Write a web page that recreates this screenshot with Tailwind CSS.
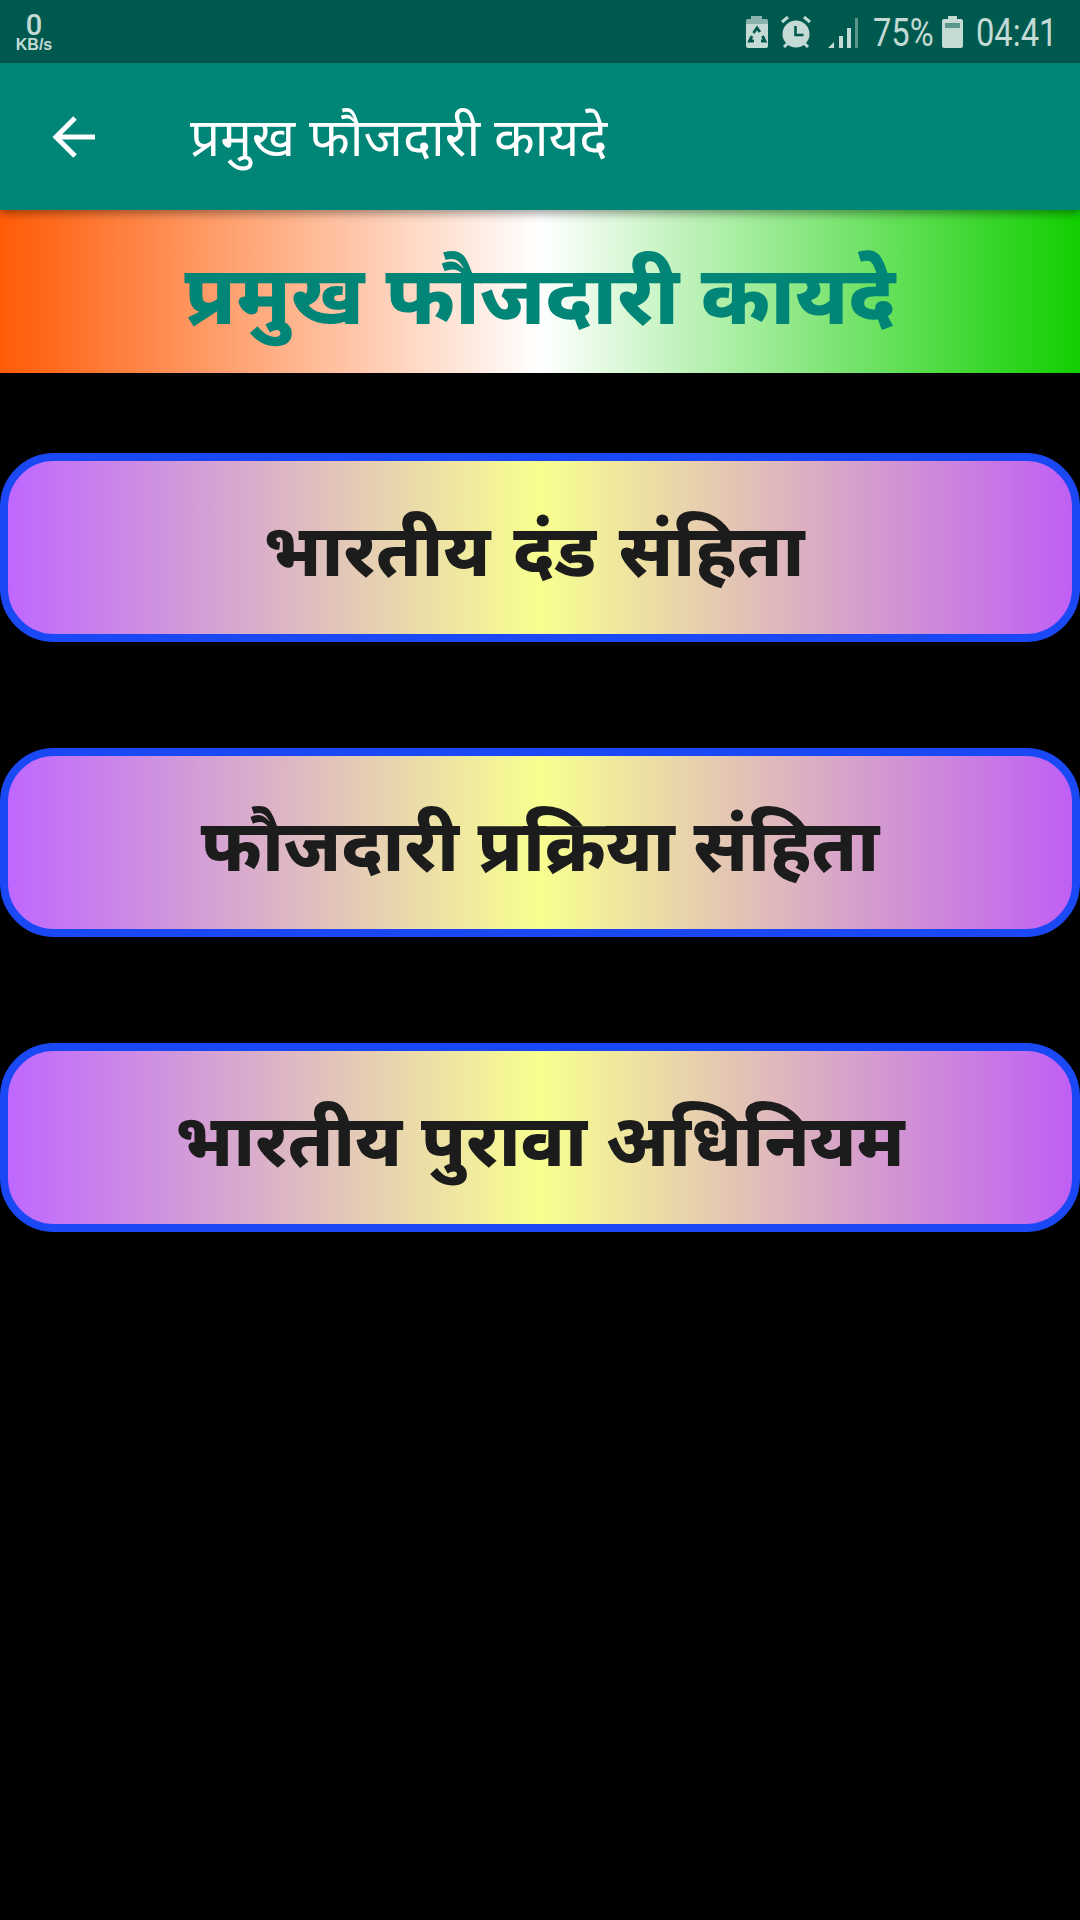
<!DOCTYPE html>
<html lang="mr">
<head>
    <meta charset="UTF-8">
    <meta name="viewport" content="width=device-width, initial-scale=1.0">
    <title>प्रमुख फौजदारी कायदे</title>
    <script src="https://cdn.jsdelivr.net/npm/@tailwindcss/browser@4"></script>
</head>
<body class="bg-black w-[1080px] h-[1920px] overflow-hidden font-['Noto_Sans','Noto_Sans_Devanagari','Lohit_Devanagari',sans-serif]">
    <!-- status bar -->
    <div class="h-[63px] bg-[#00594e] flex items-center text-[#c4dad5] font-['Roboto',sans-serif]">
        <div class="w-[68px] flex flex-col items-center">
            <span class="text-[29px] font-medium h-[25px] leading-[25px] mt-[1px]">0</span>
            <span class="text-[16px] h-[14px] leading-[14px] font-bold font-['Liberation_Sans',sans-serif]">KB/s</span>
        </div>
        <div class="flex-1 flex items-center justify-end pr-[26px]">
            <svg class="w-[22px] h-[32px]" viewBox="0 0 22 32">
                <path fill="#c4dad5" d="M5 0h11v3h4a2 2 0 0 1 2 2v25a2 2 0 0 1-2 2H2a2 2 0 0 1-2-2V5a2 2 0 0 1 2-2h3z"/>
                <path fill="#00594e" fill-opacity="0.3" d="M5 0h11v3h4a2 2 0 0 1 2 2v3H0V5a2 2 0 0 1 2-2h3z"/>
                <path fill="none" stroke="#00594e" stroke-width="2.8" d="M7.5 17l3.5-5 3 4M15 25h4l-2.5-5M8 25H3.500l2.500-5"/>
            </svg>
            <svg class="w-[30px] h-[32px] ml-[13px]" viewBox="0 0 30 32">
                <circle cx="15" cy="18" r="13.5" fill="#c4dad5"/>
                <path fill="none" stroke="#00594e" stroke-width="2.6" d="M14.500 10v9h8"/>
                <path fill="none" stroke="#c4dad5" stroke-width="3" d="M1 6l6-5M29 6l-6-5M3 31l4-4M27 31l-4-4"/>
            </svg>
            <svg class="w-[30px] h-[30px] ml-[17px] mt-[2px]" viewBox="0 0 30 30">
                <path fill="#c4dad5" d="M0 30l6-6v6zM11 18h4v12h-4zM19 10h4v20h-4z"/>
                <path fill="#5b968b" d="M27 0h3v30h-3z"/>
            </svg>
            <span class="w-[59px] ml-[15px] mt-[3px] text-[38px] leading-none scale-x-[0.86] origin-left whitespace-nowrap">75%</span>
            <svg class="w-[21px] h-[32px] ml-[10px]" viewBox="0 0 21 32">
                <path fill="#c4dad5" d="M6 0h9v3h4a2 2 0 0 1 2 2v25a2 2 0 0 1-2 2H2a2 2 0 0 1-2-2V5a2 2 0 0 1 2-2h4z"/>
                <path fill="#5b968b" d="M3 7h15v5H3z"/>
            </svg>
            <span class="w-[78px] ml-[13px] mt-[3px] text-[38px] leading-none scale-x-[0.86] origin-left whitespace-nowrap">04:41</span>
        </div>
    </div>

    <!-- toolbar -->
    <div class="relative z-10 h-[147px] bg-[#008577] flex items-center shadow-[0_4px_8px_rgba(0,0,0,0.35)]">
        <svg class="w-[44px] h-[44px] ml-[52px]" viewBox="0 0 44 44">
            <path fill="none" stroke="#fff" stroke-width="5" d="M43 22H4M23 3L4 22l19 19"/>
        </svg>
        <h1 class="ml-[94px] text-[53px] text-white leading-none -mt-[3px]">प्रमुख फौजदारी कायदे</h1>
    </div>

    <!-- banner -->
    <div class="h-[163px] bg-linear-to-r/srgb from-[#ff5b06] via-white to-[#11cf00] flex items-center justify-center">
        <h2 class="text-[82px] font-extrabold text-[#008577] leading-none">प्रमुख फौजदारी कायदे</h2>
    </div>

    <!-- menu -->
    <div class="mt-[80px] flex flex-col gap-[106px]">
        <button class="h-[189px] pr-[12px] border-8 border-[#1a48f5] rounded-[54px] bg-linear-to-r/srgb from-[#bf67ff] via-[#f8ff8f] to-[#bf5ff5] text-[72px] font-extrabold text-[#1c1c1c] leading-none [word-spacing:4px]">भारतीय दंड संहिता</button>
        <button class="h-[189px] border-8 border-[#1a48f5] rounded-[54px] bg-linear-to-r/srgb from-[#bf67ff] via-[#f8ff8f] to-[#bf5ff5] text-[72px] font-extrabold text-[#1c1c1c] leading-none">फौजदारी प्रक्रिया संहिता</button>
        <button class="h-[189px] border-8 border-[#1a48f5] rounded-[54px] bg-linear-to-r/srgb from-[#bf67ff] via-[#f8ff8f] to-[#bf5ff5] text-[72px] font-extrabold text-[#1c1c1c] leading-none">भारतीय पुरावा अधिनियम</button>
    </div>
</body>
</html>
